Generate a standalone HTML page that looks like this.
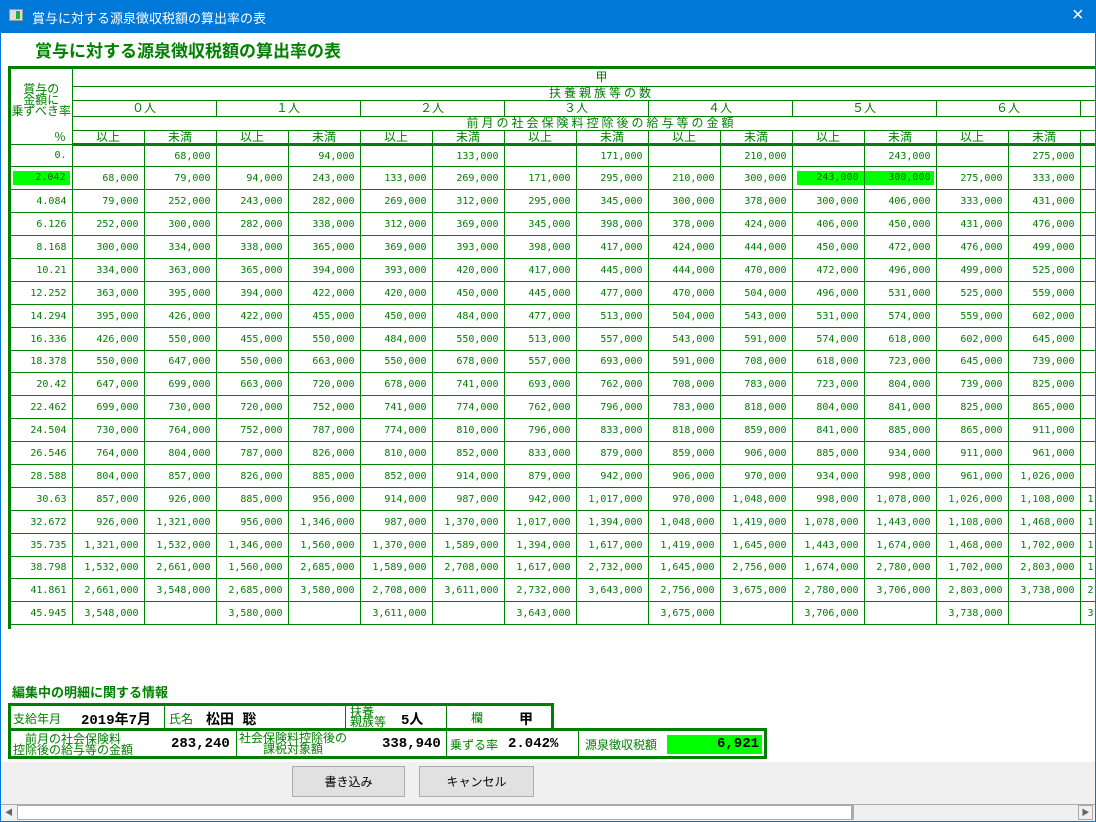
<!DOCTYPE html>
<html><head><meta charset="utf-8">
<style>
*{box-sizing:border-box;margin:0;padding:0}
body{width:1096px;height:822px;overflow:hidden;background:#fff;font-family:"Liberation Sans","Noto Sans CJK JP",sans-serif;position:relative}
.tb{position:absolute;left:0;top:0;width:1096px;height:33px;background:#0078d7;color:#fff;font-size:13px}
.frame{position:absolute;left:0;top:0;width:1096px;height:822px;border:1px solid #0078d7;border-top:none;pointer-events:none}
.title{position:absolute;left:35px;top:37px;color:#008000;font-weight:bold;font-size:17px;font-family:"Noto Sans CJK JP",sans-serif}
.wrap{position:absolute;left:8px;top:66px;width:1088px;height:563px;overflow:hidden;border-left:3px solid #008000;border-top:3px solid #008000}
table.t{border-collapse:collapse;table-layout:fixed;width:1120px;color:#008000;font-family:"DejaVu Sans Mono","Liberation Mono",monospace;font-size:10px}
.t td{border:1px solid #008000;padding:0 5px 0 0;text-align:right;white-space:nowrap;overflow:hidden}
.t tr.d td{height:22.9px;padding-top:1px}
.t tr.h td{text-align:center;padding:0;font-family:"Noto Sans CJK JP",sans-serif;font-size:12px;line-height:12px}
.t td.l{padding-left:7px;text-align:left}
.g{background:#00ff00;color:#006000}
.t tr.thick td{border-bottom:3px solid #008000}
.info{position:absolute;color:#008000;font-family:"Noto Sans CJK JP",sans-serif}
.box{position:absolute;border:3px solid #008000;background:#fff}
.c{position:absolute;top:0;bottom:0;border-left:1px solid #008000}
.lb{position:absolute;color:#008000;font-size:12px;font-family:"Noto Sans CJK JP",sans-serif;line-height:11px}
.v{position:absolute;color:#000;font-weight:bold;font-size:14px;font-family:"Liberation Mono","Noto Sans CJK JP",monospace}
.gray{position:absolute;left:1px;top:762px;width:1094px;height:43px;background:#f0f0f0}
.btn{position:absolute;top:766px;height:31px;background:#e1e1e1;border:1px solid #adadad;font-size:12px;text-align:center;line-height:29px;font-family:"Noto Sans CJK JP",sans-serif}
.sb{position:absolute;left:1px;top:804px;width:1094px;height:17px;background:#f0f0f0;border-top:1px solid #aaa}
</style></head><body>
<div class="tb">
<div style="position:absolute;left:9px;top:9px;width:14px;height:12px;background:#ddd;border:1px solid #999"><div style="position:absolute;left:6px;top:1px;width:4px;height:8px;background:#2a5"></div></div>
<div style="position:absolute;left:32px;top:8px">賞与に対する源泉徴収税額の算出率の表</div>
<div style="position:absolute;left:1072px;top:4px;font-size:20px;font-weight:normal">×</div>
</div>
<div class="title">賞与に対する源泉徴収税額の算出率の表</div>

<div class="wrap">
<table class="t">
<colgroup><col style="width:61px"><col style="width:72px"><col style="width:72px"><col style="width:72px"><col style="width:72px"><col style="width:72px"><col style="width:72px"><col style="width:72px"><col style="width:72px"><col style="width:72px"><col style="width:72px"><col style="width:72px"><col style="width:72px"><col style="width:72px"><col style="width:72px"><col style="width:51px"></colgroup>
<tr class="h"><td rowspan="5" style="vertical-align:top;border-left:none;border-top:none;font-size:12px;line-height:11px;padding-top:14px;position:relative;height:74px">賞与の<br>金額に<br>乗ずべき率<div style="position:absolute;right:6px;bottom:2px">%</div></td><td colspan="15" style="height:17px;border-top:none">甲</td></tr>
<tr class="h"><td colspan="15" style="height:14px;letter-spacing:3px">扶養親族等の数</td></tr>
<tr class="h"><td colspan="2" style="height:16px">０人</td><td colspan="2">１人</td><td colspan="2">２人</td><td colspan="2">３人</td><td colspan="2">４人</td><td colspan="2">５人</td><td colspan="2">６人</td><td></td></tr>
<tr class="h"><td colspan="15" style="height:14px;letter-spacing:3px">前月の社会保険料控除後の給与等の金額</td></tr>
<tr class="h thick"><td style="height:14px">以上</td><td>未満</td><td>以上</td><td>未満</td><td>以上</td><td>未満</td><td>以上</td><td>未満</td><td>以上</td><td>未満</td><td>以上</td><td>未満</td><td>以上</td><td>未満</td><td></td></tr>
<tr class="d"><td style="border-left:none">0.</td><td></td><td>68,000</td><td></td><td>94,000</td><td></td><td>133,000</td><td></td><td>171,000</td><td></td><td>210,000</td><td></td><td>243,000</td><td></td><td>275,000</td><td></td></tr>
<tr class="d"><td style="border-left:none;padding:3px 2px 3px 2px"><div class="g" style="text-align:right;padding-right:4px;height:14px;line-height:14px">2.042</div></td><td>68,000</td><td>79,000</td><td>94,000</td><td>243,000</td><td>133,000</td><td>269,000</td><td>171,000</td><td>295,000</td><td>210,000</td><td>300,000</td><td style="padding:3px 0 3px 4px"><div class="g" style="height:14px;line-height:14px;padding-right:5px">243,000</div></td><td style="padding:3px 2px 3px 0"><div class="g" style="height:14px;line-height:14px;padding-right:3px">300,000</div></td><td>275,000</td><td>333,000</td><td></td></tr>
<tr class="d"><td style="border-left:none">4.084</td><td>79,000</td><td>252,000</td><td>243,000</td><td>282,000</td><td>269,000</td><td>312,000</td><td>295,000</td><td>345,000</td><td>300,000</td><td>378,000</td><td>300,000</td><td>406,000</td><td>333,000</td><td>431,000</td><td></td></tr>
<tr class="d"><td style="border-left:none">6.126</td><td>252,000</td><td>300,000</td><td>282,000</td><td>338,000</td><td>312,000</td><td>369,000</td><td>345,000</td><td>398,000</td><td>378,000</td><td>424,000</td><td>406,000</td><td>450,000</td><td>431,000</td><td>476,000</td><td></td></tr>
<tr class="d"><td style="border-left:none">8.168</td><td>300,000</td><td>334,000</td><td>338,000</td><td>365,000</td><td>369,000</td><td>393,000</td><td>398,000</td><td>417,000</td><td>424,000</td><td>444,000</td><td>450,000</td><td>472,000</td><td>476,000</td><td>499,000</td><td></td></tr>
<tr class="d"><td style="border-left:none">10.21</td><td>334,000</td><td>363,000</td><td>365,000</td><td>394,000</td><td>393,000</td><td>420,000</td><td>417,000</td><td>445,000</td><td>444,000</td><td>470,000</td><td>472,000</td><td>496,000</td><td>499,000</td><td>525,000</td><td></td></tr>
<tr class="d"><td style="border-left:none">12.252</td><td>363,000</td><td>395,000</td><td>394,000</td><td>422,000</td><td>420,000</td><td>450,000</td><td>445,000</td><td>477,000</td><td>470,000</td><td>504,000</td><td>496,000</td><td>531,000</td><td>525,000</td><td>559,000</td><td></td></tr>
<tr class="d"><td style="border-left:none">14.294</td><td>395,000</td><td>426,000</td><td>422,000</td><td>455,000</td><td>450,000</td><td>484,000</td><td>477,000</td><td>513,000</td><td>504,000</td><td>543,000</td><td>531,000</td><td>574,000</td><td>559,000</td><td>602,000</td><td></td></tr>
<tr class="d"><td style="border-left:none">16.336</td><td>426,000</td><td>550,000</td><td>455,000</td><td>550,000</td><td>484,000</td><td>550,000</td><td>513,000</td><td>557,000</td><td>543,000</td><td>591,000</td><td>574,000</td><td>618,000</td><td>602,000</td><td>645,000</td><td></td></tr>
<tr class="d"><td style="border-left:none">18.378</td><td>550,000</td><td>647,000</td><td>550,000</td><td>663,000</td><td>550,000</td><td>678,000</td><td>557,000</td><td>693,000</td><td>591,000</td><td>708,000</td><td>618,000</td><td>723,000</td><td>645,000</td><td>739,000</td><td></td></tr>
<tr class="d"><td style="border-left:none">20.42</td><td>647,000</td><td>699,000</td><td>663,000</td><td>720,000</td><td>678,000</td><td>741,000</td><td>693,000</td><td>762,000</td><td>708,000</td><td>783,000</td><td>723,000</td><td>804,000</td><td>739,000</td><td>825,000</td><td></td></tr>
<tr class="d"><td style="border-left:none">22.462</td><td>699,000</td><td>730,000</td><td>720,000</td><td>752,000</td><td>741,000</td><td>774,000</td><td>762,000</td><td>796,000</td><td>783,000</td><td>818,000</td><td>804,000</td><td>841,000</td><td>825,000</td><td>865,000</td><td></td></tr>
<tr class="d"><td style="border-left:none">24.504</td><td>730,000</td><td>764,000</td><td>752,000</td><td>787,000</td><td>774,000</td><td>810,000</td><td>796,000</td><td>833,000</td><td>818,000</td><td>859,000</td><td>841,000</td><td>885,000</td><td>865,000</td><td>911,000</td><td></td></tr>
<tr class="d"><td style="border-left:none">26.546</td><td>764,000</td><td>804,000</td><td>787,000</td><td>826,000</td><td>810,000</td><td>852,000</td><td>833,000</td><td>879,000</td><td>859,000</td><td>906,000</td><td>885,000</td><td>934,000</td><td>911,000</td><td>961,000</td><td></td></tr>
<tr class="d"><td style="border-left:none">28.588</td><td>804,000</td><td>857,000</td><td>826,000</td><td>885,000</td><td>852,000</td><td>914,000</td><td>879,000</td><td>942,000</td><td>906,000</td><td>970,000</td><td>934,000</td><td>998,000</td><td>961,000</td><td>1,026,000</td><td></td></tr>
<tr class="d"><td style="border-left:none">30.63</td><td>857,000</td><td>926,000</td><td>885,000</td><td>956,000</td><td>914,000</td><td>987,000</td><td>942,000</td><td>1,017,000</td><td>970,000</td><td>1,048,000</td><td>998,000</td><td>1,078,000</td><td>1,026,000</td><td>1,108,000</td><td class="l">1</td></tr>
<tr class="d"><td style="border-left:none">32.672</td><td>926,000</td><td>1,321,000</td><td>956,000</td><td>1,346,000</td><td>987,000</td><td>1,370,000</td><td>1,017,000</td><td>1,394,000</td><td>1,048,000</td><td>1,419,000</td><td>1,078,000</td><td>1,443,000</td><td>1,108,000</td><td>1,468,000</td><td class="l">1</td></tr>
<tr class="d"><td style="border-left:none">35.735</td><td>1,321,000</td><td>1,532,000</td><td>1,346,000</td><td>1,560,000</td><td>1,370,000</td><td>1,589,000</td><td>1,394,000</td><td>1,617,000</td><td>1,419,000</td><td>1,645,000</td><td>1,443,000</td><td>1,674,000</td><td>1,468,000</td><td>1,702,000</td><td class="l">1</td></tr>
<tr class="d"><td style="border-left:none">38.798</td><td>1,532,000</td><td>2,661,000</td><td>1,560,000</td><td>2,685,000</td><td>1,589,000</td><td>2,708,000</td><td>1,617,000</td><td>2,732,000</td><td>1,645,000</td><td>2,756,000</td><td>1,674,000</td><td>2,780,000</td><td>1,702,000</td><td>2,803,000</td><td class="l">1</td></tr>
<tr class="d"><td style="border-left:none">41.861</td><td>2,661,000</td><td>3,548,000</td><td>2,685,000</td><td>3,580,000</td><td>2,708,000</td><td>3,611,000</td><td>2,732,000</td><td>3,643,000</td><td>2,756,000</td><td>3,675,000</td><td>2,780,000</td><td>3,706,000</td><td>2,803,000</td><td>3,738,000</td><td class="l">2</td></tr>
<tr class="d"><td style="border-left:none">45.945</td><td>3,548,000</td><td></td><td>3,580,000</td><td></td><td>3,611,000</td><td></td><td>3,643,000</td><td></td><td>3,675,000</td><td></td><td>3,706,000</td><td></td><td>3,738,000</td><td></td><td class="l">3</td></tr>
</table>
</div>

<div class="info" style="left:12px;top:682px;font-size:13px;font-weight:bold">編集中の明細に関する情報</div>

<div class="box" style="left:8px;top:703px;width:546px;height:28px">
 <div class="lb" style="left:2px;top:7px">支給年月</div>
 <div class="v" style="left:70px;top:3px">2019年7月</div>
 <div class="c" style="left:153px"></div>
 <div class="lb" style="left:158px;top:7px">氏名</div>
 <div class="v" style="left:195px;top:3px">松田 聡</div>
 <div class="c" style="left:334px"></div>
 <div class="lb" style="left:339px;top:1px;line-height:10px">扶養<br>親族等</div>
 <div class="v" style="left:390px;top:3px">5人</div>
 <div class="c" style="left:435px"></div>
 <div class="lb" style="left:460px;top:6px">欄</div>
 <div class="v" style="left:508px;top:3px">甲</div>
</div>
<div class="box" style="left:8px;top:728px;width:759px;height:31px">
 <div class="lb" style="left:2px;top:2px;line-height:11px;text-align:center">前月の社会保険料<br>控除後の給与等の金額</div>
 <div class="v" style="left:160px;top:5px">283,240</div>
 <div class="c" style="left:225px"></div>
 <div class="lb" style="left:228px;top:1px;line-height:11px;text-align:center">社会保険料控除後の<br>課税対象額</div>
 <div class="v" style="left:371px;top:5px">338,940</div>
 <div class="c" style="left:435px"></div>
 <div class="lb" style="left:439px;top:8px">乗ずる率</div>
 <div class="v" style="left:497px;top:5px">2.042%</div>
 <div class="c" style="left:567px"></div>
 <div class="lb" style="left:574px;top:8px">源泉徴収税額</div>
 <div style="position:absolute;left:656px;top:4px;width:95px;height:19px;background:#00ff00"></div>
 <div class="v" style="left:656px;top:4px;width:92px;text-align:right;line-height:19px">6,921</div>
</div>

<div class="gray"></div>
<div class="btn" style="left:292px;width:113px">書き込み</div>
<div class="btn" style="left:419px;width:115px">キャンセル</div>
<div class="sb">
 <div style="position:absolute;left:0;top:0;width:16px;height:16px;font-size:8px;color:#666;text-align:center;line-height:16px">◀</div>
 <div style="position:absolute;left:16px;top:0;width:837px;height:15px;background:#fff;border:1px solid #aaa;border-right:3px solid #aaa"></div>
 <div style="position:absolute;right:2px;top:0;width:15px;height:15px;border:1px solid #aaa;font-size:8px;color:#666;text-align:center;line-height:14px">▶</div>
</div>
<div class="frame"></div>
</body></html>
